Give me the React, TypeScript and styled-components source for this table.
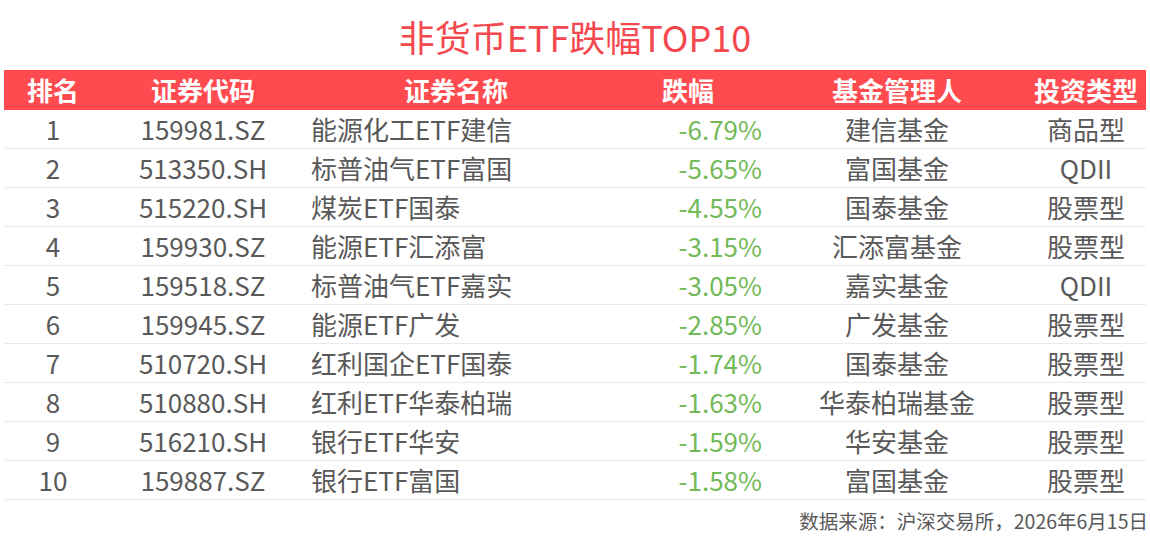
import React from "react";
import styled, { createGlobalStyle } from "styled-components";

const GlobalStyle = createGlobalStyle`
  html, body {
    margin: 0;
    padding: 0;
    background: #fff;
  }
  body {
    font-family: "Noto Sans CJK SC", "Noto Sans", sans-serif;
  }
`;

const Page = styled.div`
  width: 1150px;
  height: 540px;
  box-sizing: border-box;
  padding: 14px 4px 0 4px;
  display: flex;
  flex-direction: column;
`;

const Title = styled.h1`
  margin: 0 0 12px;
  font-size: 36px;
  font-weight: 400;
  line-height: 44px;
  color: #f5484e;
  text-align: center;
`;

const cols = "98px 202px 304px 160px 258px 120px";

const HeadRow = styled.div`
  display: grid;
  grid-template-columns: ${cols};
  height: 40px;
  background: #ff4b50;
  align-items: center;
`;

const HeadCell = styled.div`
  color: #fff;
  font-size: 26px;
  font-weight: 700;
  line-height: 40px;
  text-align: center;
  white-space: nowrap;
`;

const Row = styled.div`
  display: grid;
  grid-template-columns: ${cols};
  height: 39px;
  box-sizing: border-box;
  border-bottom: 1px solid #e8e9ef;
  align-items: center;
`;

const Cell = styled.div<{ $align?: "left" | "right" | "center"; $green?: boolean }>`
  font-size: 26px;
  font-weight: 400;
  line-height: 38px;
  color: ${(p) => (p.$green ? "#72b957" : "#595959")};
  text-align: ${(p) => p.$align || "center"};
  padding: ${(p) => (p.$align === "left" ? "0 0 0 7px" : p.$align === "right" ? "0 6px 0 0" : "0")};
  white-space: nowrap;
`;

const Footer = styled.div`
  margin-top: 7px;
  font-size: 19.5px;
  font-weight: 400;
  line-height: 28px;
  color: #595959;
  text-align: right;
  margin-right: -2px;
`;

const headers = ["排名", "证券代码", "证券名称", "跌幅", "基金管理人", "投资类型"];

const rows = [
  ["1", "159981.SZ", "能源化工ETF建信", "-6.79%", "建信基金", "商品型"],
  ["2", "513350.SH", "标普油气ETF富国", "-5.65%", "富国基金", "QDII"],
  ["3", "515220.SH", "煤炭ETF国泰", "-4.55%", "国泰基金", "股票型"],
  ["4", "159930.SZ", "能源ETF汇添富", "-3.15%", "汇添富基金", "股票型"],
  ["5", "159518.SZ", "标普油气ETF嘉实", "-3.05%", "嘉实基金", "QDII"],
  ["6", "159945.SZ", "能源ETF广发", "-2.85%", "广发基金", "股票型"],
  ["7", "510720.SH", "红利国企ETF国泰", "-1.74%", "国泰基金", "股票型"],
  ["8", "510880.SH", "红利ETF华泰柏瑞", "-1.63%", "华泰柏瑞基金", "股票型"],
  ["9", "516210.SH", "银行ETF华安", "-1.59%", "华安基金", "股票型"],
  ["10", "159887.SZ", "银行ETF富国", "-1.58%", "富国基金", "股票型"],
];

export default function App() {
  return (
    <>
      <GlobalStyle />
      <Page>
        <Title>非货币ETF跌幅TOP10</Title>
        <HeadRow>
          {headers.map((h) => (
            <HeadCell key={h}>{h}</HeadCell>
          ))}
        </HeadRow>
        {rows.map((r) => (
          <Row key={r[1]}>
            <Cell>{r[0]}</Cell>
            <Cell>{r[1]}</Cell>
            <Cell $align="left">{r[2]}</Cell>
            <Cell $align="right" $green>
              {r[3]}
            </Cell>
            <Cell>{r[4]}</Cell>
            <Cell>{r[5]}</Cell>
          </Row>
        ))}
        <Footer>数据来源：沪深交易所，2026年6月15日</Footer>
      </Page>
    </>
  );
}
